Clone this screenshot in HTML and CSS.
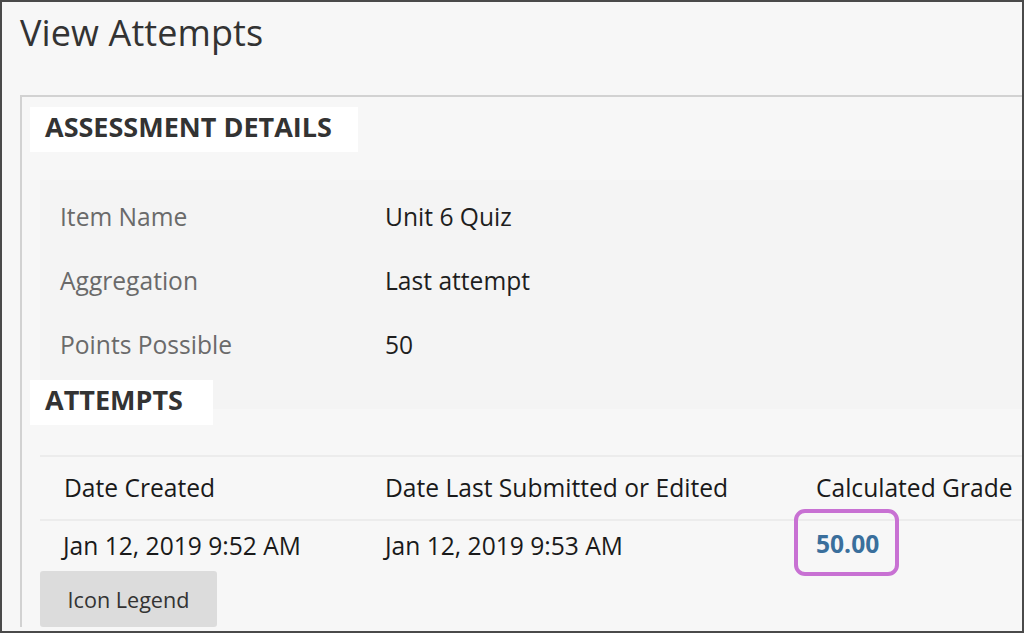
FILE: index.html
```html
<!DOCTYPE html>
<html>
<head>
<meta charset="utf-8">
<link rel="stylesheet" href="styles.css">
</head>
<body>
<div class="frame">
  <h1 class="page-title">View Attempts</h1>
  <div class="panel">
    <h2 class="section-head">ASSESSMENT DETAILS</h2>
    <div class="details">
      <div class="detail-row"><span class="label">Item Name</span><span class="value">Unit 6 Quiz</span></div>
      <div class="detail-row"><span class="label">Aggregation</span><span class="value">Last attempt</span></div>
      <div class="detail-row"><span class="label">Points Possible</span><span class="value">50</span></div>
    </div>
    <h2 class="section-head attempts-head">ATTEMPTS</h2>
    <div class="attempts">
      <div class="t-row t-header">
        <div class="cell">Date Created</div>
        <div class="cell">Date Last Submitted or Edited</div>
        <div class="cell">Calculated Grade</div>
      </div>
      <div class="t-row t-data">
        <div class="cell">Jan 12, 2019 9:52 AM</div>
        <div class="cell">Jan 12, 2019 9:53 AM</div>
        <div class="cell grade-cell"><span class="grade-box"><span class="grade">50.00</span></span></div>
      </div>
    </div>
    <button class="legend-btn">Icon Legend</button>
  </div>
</div>
</body>
</html>
```

FILE: styles.css
```css
html, body {
  margin: 0;
  padding: 0;
}
body {
  background: #f7f7f7;
  font-family: "Open Sans", "Liberation Sans", sans-serif;
}
.frame {
  width: 1024px;
  height: 633px;
  box-sizing: border-box;
  border: 2px solid #4a4a4a;
  background: #f7f7f7;
  overflow: hidden;
}
.page-title {
  margin: 0;
  padding: 6px 0 0 18px;
  font-size: 36px;
  font-weight: 400;
  color: #333;
  line-height: 50px;
  height: 93px;
  box-sizing: border-box;
  letter-spacing: 0.1px;
}
.panel {
  margin-left: 18px;
  border-top: 2px solid #d2d2d2;
  border-left: 2px solid #d2d2d2;
  padding-top: 10px;
  width: 1100px;
}
.section-head {
  margin: 0 0 0 8px;
  background: #fff;
  font-size: 27px;
  font-weight: 700;
  color: #333;
  height: 45px;
  line-height: 40px;
  padding-left: 15px;
  box-sizing: border-box;
  width: 328px;
}
.details {
  margin: 28px 0 0 18px;
  background: #f4f4f4;
  padding: 5px 0 32px 20px;
}
.detail-row {
  display: grid;
  grid-template-columns: 325px 1fr;
  height: 64px;
  line-height: 64px;
  font-size: 24.6px;
}
.label {
  color: #6a6a6a;
}
.value {
  color: #1e1e1e;
}
.section-head.attempts-head {
  width: 183px;
  margin-top: -29px;
  position: relative;
}
.attempts {
  margin: 30px 0 0 18px;
  border-top: 2px solid #ececec;
}
.t-row {
  display: grid;
  grid-template-columns: 321px 431px 1fr;
  align-items: start;
  font-size: 24.6px;
  color: #1a1a1a;
}
.t-header {
  height: 62px;
  line-height: 62px;
  border-bottom: 2px solid #ececec;
}
.t-data {
  height: 50px;
  line-height: 50px;
}
.cell {
  padding-left: 24px;
}
.t-data .cell:first-child {
  padding-left: 23px;
}
.grade-cell {
  padding-left: 2px;
  display: flex;
}
.grade-box {
  display: block;
  border: 4px solid #c871d3;
  border-radius: 11px;
  padding: 0 16px 0 18px;
  height: 67px;
  box-sizing: border-box;
  line-height: 62px;
  margin-top: -12px;
}
.grade {
  font-weight: 700;
  color: #3a6f9c;
}
.legend-btn {
  display: block;
  margin-left: 18px;
  width: 177px;
  height: 56px;
  background: #dcdcdc;
  border: none;
  border-radius: 3px;
  font-family: "Open Sans", "Liberation Sans", sans-serif;
  font-size: 21.6px;
  color: #333;
  padding: 0;
}
```
